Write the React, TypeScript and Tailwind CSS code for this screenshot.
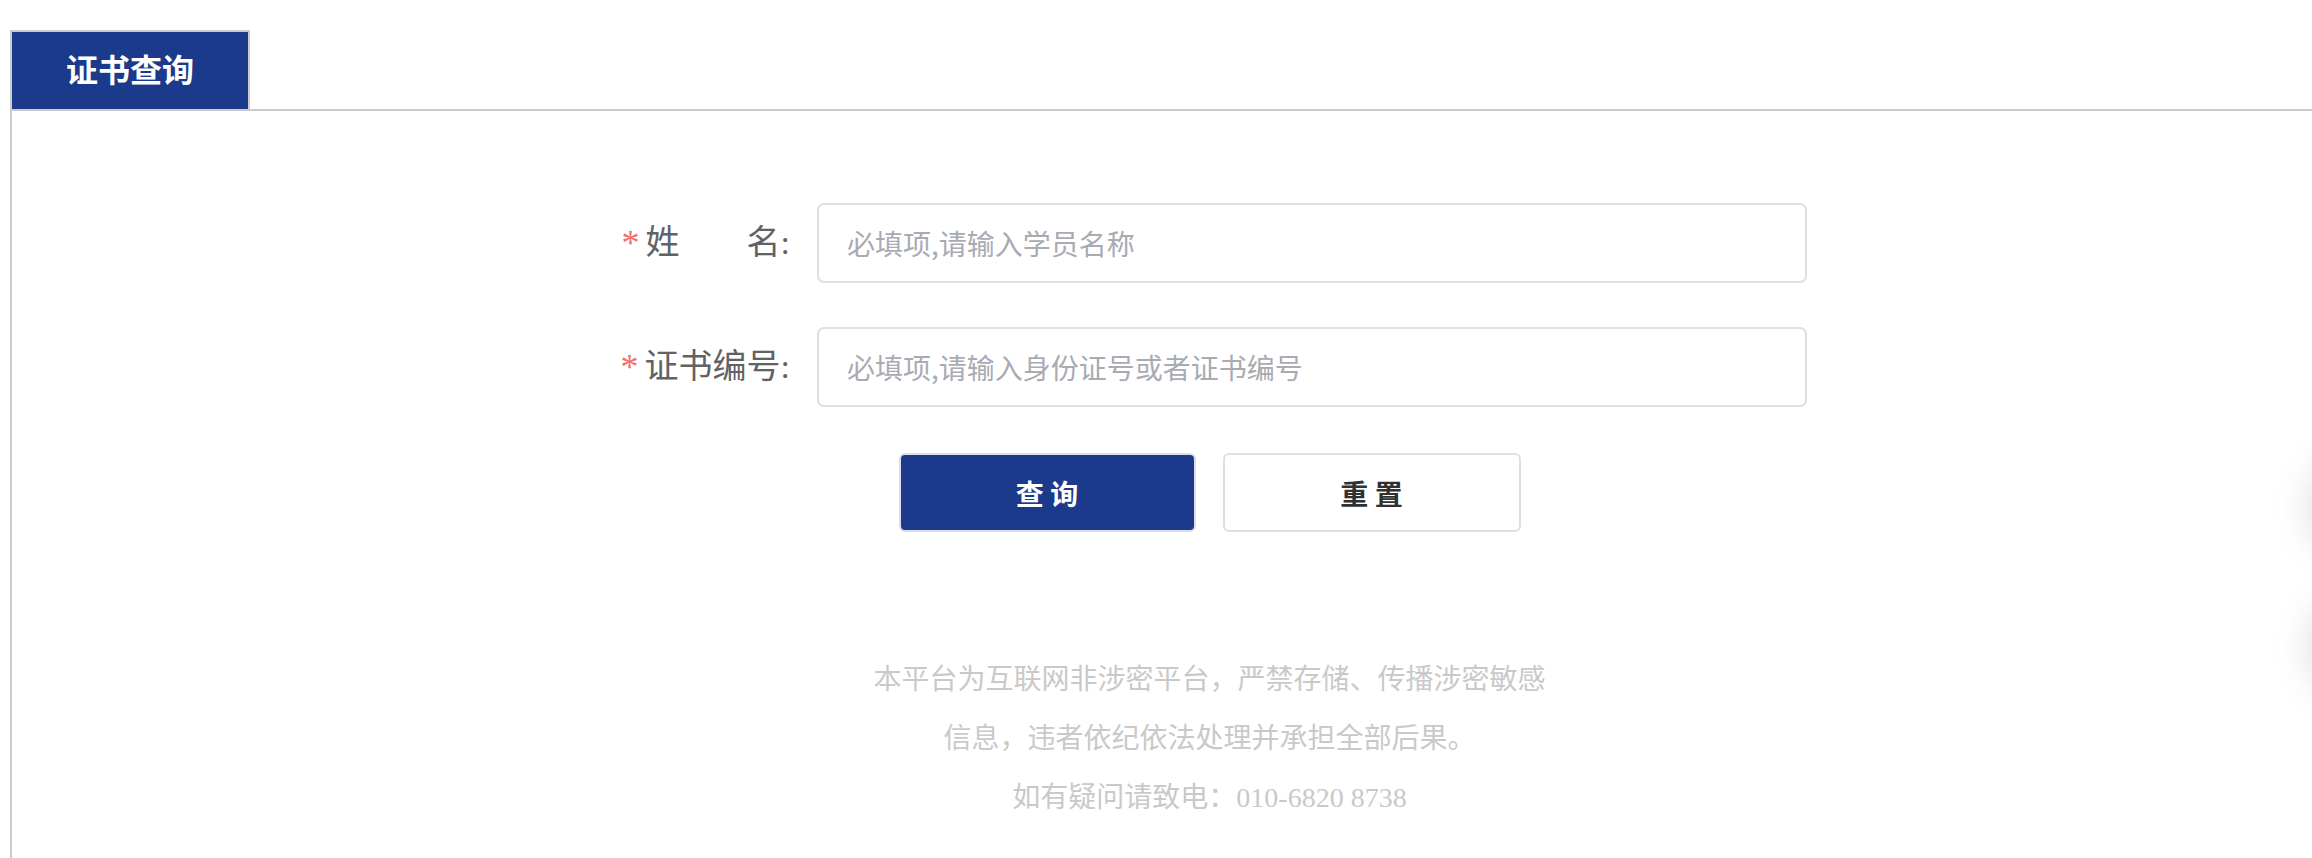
import { useState } from 'react';

const serif = "font-['Liberation_Serif','Noto_Sans_CJK_SC',serif]";

export default function App() {
  const [form, setForm] = useState({ name: '', certNo: '' });

  return (
    <div className={`relative min-h-screen bg-white ${serif}`}>
      {/* Tab header */}
      <div className="ml-[10px] pt-[30px]">
        <div className="flex border-b-2 border-[#cccccc]">
          <div className="flex h-[79px] w-[240px] items-center justify-center border-2 border-b-0 border-[#cccccc] bg-[#1c3a8b]">
            <span className="text-[32px] font-bold leading-none text-white">证书查询</span>
          </div>
        </div>

        {/* Body */}
        <div className="min-h-[760px] border-l-2 border-[#cccccc] pl-[600px] pt-[92px]">
          <div className="w-[1195px]">
            {/* Name row */}
            <div className="flex items-center">
              <label className="flex w-[205px] items-center justify-end pr-[27px] text-[34px] leading-none text-[#606266]">
                <span className="mr-[6px] text-[36px] text-[#f56c6c]">*</span>
                <span>姓</span>
                <span className="inline-block w-[67px]" />
                <span>名:</span>
              </label>
              <input
                value={form.name}
                onChange={(e) => setForm({ ...form, name: e.target.value })}
                placeholder="必填项,请输入学员名称"
                className="h-[80px] w-[990px] rounded-[7px] border-2 border-[#dcdfe6] bg-white pl-[28px] font-['Noto_Sans_CJK_SC',sans-serif] text-[28px] text-[#606266] outline-none placeholder:text-[#a8abb2]"
              />
            </div>

            {/* Certificate row */}
            <div className="mt-[44px] flex items-center">
              <label className="flex w-[205px] items-center justify-end pr-[27px] text-[34px] leading-none text-[#606266]">
                <span className="mr-[6px] text-[36px] text-[#f56c6c]">*</span>
                <span>证书编号:</span>
              </label>
              <input
                value={form.certNo}
                onChange={(e) => setForm({ ...form, certNo: e.target.value })}
                placeholder="必填项,请输入身份证号或者证书编号"
                className="h-[80px] w-[990px] rounded-[7px] border-2 border-[#dcdfe6] bg-white pl-[28px] font-['Noto_Sans_CJK_SC',sans-serif] text-[28px] text-[#606266] outline-none placeholder:text-[#a8abb2]"
              />
            </div>

            {/* Actions */}
            <div className="mt-[46px] flex justify-center gap-[27px]">
              <button className="h-[79px] w-[297px] rounded-[6px] border-2 border-[#dcdfe6] bg-[#1c3a8b] font-['Noto_Sans_CJK_SC',sans-serif] text-[28px] font-bold text-white">
                查 询
              </button>
              <button
                onClick={() => setForm({ name: '', certNo: '' })}
                className="h-[79px] w-[298px] rounded-[6px] border-2 border-[#dcdfe6] bg-white font-['Noto_Sans_CJK_SC',sans-serif] text-[28px] font-bold text-[#303133]"
              >
                重 置
              </button>
            </div>

            {/* Notice */}
            <div className="mt-[118px] text-center text-[28px] leading-[59px] text-[#c9c9c9]">
              <p>本平台为互联网非涉密平台，严禁存储、传播涉密敏感</p>
              <p>信息，违者依纪依法处理并承担全部后果。</p>
              <p>如有疑问请致电：010-6820 8738</p>
            </div>
          </div>
        </div>
      </div>

      {/* Floating side buttons, mostly off-screen */}
      <div className="fixed right-[-96px] top-[462px] h-[90px] w-[90px] rounded-full bg-white shadow-[0_0_45px_rgba(0,0,0,0.22)]" />
      <div className="fixed right-[-96px] top-[602px] h-[90px] w-[90px] rounded-full bg-white shadow-[0_0_45px_rgba(0,0,0,0.22)]" />
    </div>
  );
}
